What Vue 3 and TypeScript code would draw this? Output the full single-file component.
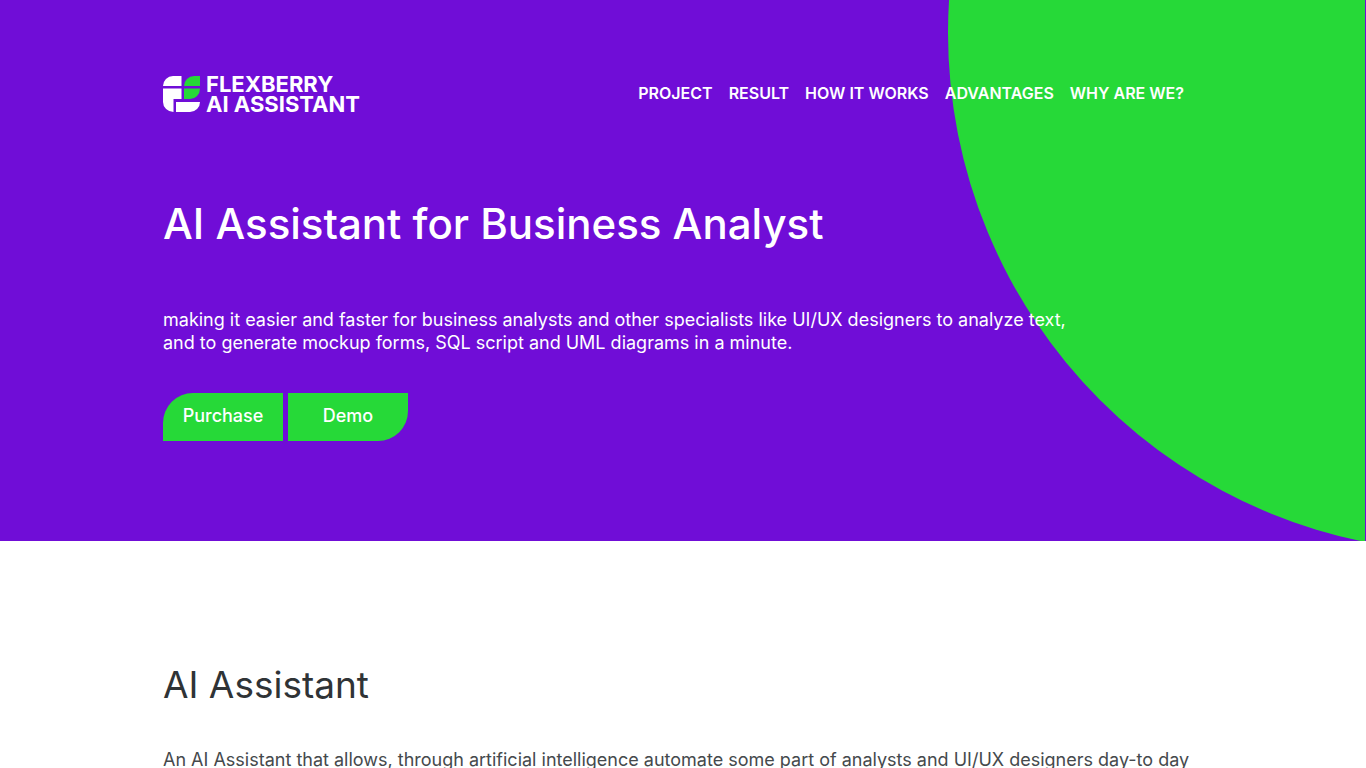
<script setup lang="ts">
interface NavItem {
  label: string
  href: string
}

const navItems: NavItem[] = [
  { label: 'PROJECT', href: '#project' },
  { label: 'RESULT', href: '#result' },
  { label: 'HOW IT WORKS', href: '#how-it-works' },
  { label: 'ADVANTAGES', href: '#advantages' },
  { label: 'WHY ARE WE?', href: '#why-are-we' },
]
</script>

<template>
  <div class="page">
    <header class="hero">
      <svg class="disc" viewBox="0 0 417 541" aria-hidden="true">
        <circle cx="519" cy="33" r="519" fill="#26d938" />
      </svg>
      <div class="container">
        <div class="topbar">
          <a class="logo" href="#top">
            <svg class="logo-mark" viewBox="0 0 37 36" aria-hidden="true">
              <path d="M0 10A10 10 0 0 1 10 0H18.500V10Z" fill="#fff" />
              <path d="M21 10A10 10 0 0 1 31 0H37V10Z" fill="#26d938" />
              <path d="M0 12.500H18.500V23H10.500V36A10.500 10 0 0 1 0 26Z" fill="#fff" />
              <path d="M21 12.500H37A10 10.500 0 0 1 27 23H21Z" fill="#26d938" />
              <path d="M13 26H37A10 10 0 0 1 27 36H13Z" fill="#fff" />
            </svg>
            <span class="logo-text">
              <span>FLEXBERRY</span>
              <span>AI ASSISTANT</span>
            </span>
          </a>
          <nav class="nav" aria-label="Main">
            <a v-for="item in navItems" :key="item.href" :href="item.href">{{ item.label }}</a>
          </nav>
        </div>
        <h1>AI Assistant for Business Analyst</h1>
        <p class="lead">
          making it easier and faster for business analysts and other specialists like UI/UX designers to analyze text,<br />
          and to generate mockup forms, SQL script and UML diagrams in a minute.
        </p>
        <div class="actions">
          <button type="button" class="action purchase">Purchase</button>
          <button type="button" class="action demo">Demo</button>
        </div>
      </div>
    </header>
    <main id="project" class="container about">
      <h2>AI Assistant</h2>
      <p>An AI Assistant that allows, through artificial intelligence automate some part of analysts and UI/UX designers day-to day</p>
    </main>
  </div>
</template>

<style>
body {
  margin: 0;
  overflow: hidden;
}
</style>

<style scoped>
.page {
  height: 100vh;
  overflow: hidden;
  background: #fff;
  color: #2f3336;
  font-family: Inter, "Liberation Sans", sans-serif;
  font-size: 18px;
}
.hero {
  position: relative;
  background: #700dd7;
  color: #fff;
  padding: 74px 0 100px;
}
.disc {
  position: absolute;
  top: 0;
  right: 1px;
  height: 100%;
}
.container {
  position: relative;
  box-sizing: border-box;
  max-width: 1040px;
  margin: 0 auto;
}
.topbar {
  display: flex;
  justify-content: space-between;
  align-items: center;
  padding-right: 19px;
}
.logo {
  display: flex;
  align-items: center;
  gap: 6px;
  color: #fff;
  text-decoration: none;
}
.logo-mark {
  width: 37px;
  height: 36px;
}
.logo-text {
  display: flex;
  flex-direction: column;
  font-size: 22px;
  font-weight: 700;
  line-height: 20px;
}
.nav {
  display: flex;
  gap: 16px;
  padding-bottom: 2px;
}
.nav a {
  color: #fff;
  font-size: 16px;
  font-weight: 600;
  line-height: 20px;
  text-decoration: none;
  white-space: nowrap;
}
h1 {
  margin: 84px 0 0;
  font-size: 42px;
  font-weight: 500;
  line-height: 52px;
}
.lead {
  margin: 58px 0 0;
  line-height: 23px;
}
.actions {
  display: flex;
  gap: 5px;
  margin-top: 39px;
}
.action {
  width: 120px;
  height: 48px;
  padding: 0 0 3px;
  border: 0;
  background: #26d938;
  color: #fff;
  font: inherit;
  font-weight: 500;
  cursor: pointer;
}
.purchase {
  border-top-left-radius: 30px;
}
.demo {
  border-bottom-right-radius: 30px;
}
.about {
  padding-top: 121px;
}
h2 {
  margin: 0;
  font-size: 37px;
  font-weight: 400;
  line-height: 46px;
}
.about p {
  margin: 40px 0 0;
  color: #45494c;
  font-weight: 400;
  line-height: 23px;
}
</style>
